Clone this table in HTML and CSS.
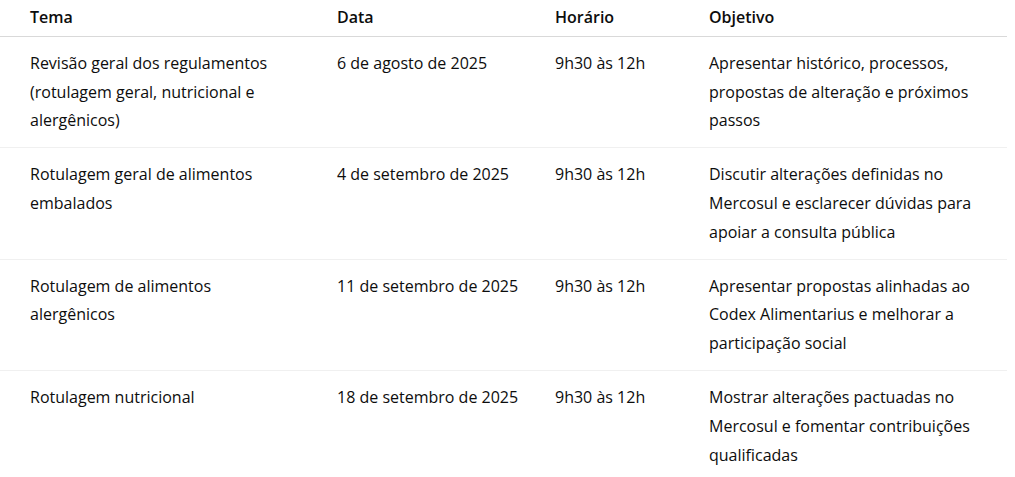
FILE: index.html
```html
<!DOCTYPE html>
<html lang="pt-BR">
<head>
<meta charset="utf-8">
<link rel="stylesheet" href="styles.css">
</head>
<body>
<table class="agenda">
  <colgroup>
    <col class="c1"><col class="c2"><col class="c3"><col class="c4">
  </colgroup>
  <thead>
    <tr><th>Tema</th><th>Data</th><th>Horário</th><th>Objetivo</th></tr>
  </thead>
  <tbody>
    <tr>
      <td>Revisão geral dos regulamentos (rotulagem geral, nutricional e alergênicos)</td>
      <td>6 de agosto de 2025</td>
      <td>9h30 às 12h</td>
      <td>Apresentar histórico, processos, propostas de alteração e próximos passos</td>
    </tr>
    <tr>
      <td>Rotulagem geral de alimentos embalados</td>
      <td>4 de setembro de 2025</td>
      <td>9h30 às 12h</td>
      <td>Discutir alterações definidas no Mercosul e esclarecer dúvidas para apoiar a consulta pública</td>
    </tr>
    <tr>
      <td>Rotulagem de alimentos alergênicos</td>
      <td>11 de setembro de 2025</td>
      <td>9h30 às 12h</td>
      <td>Apresentar propostas alinhadas ao Codex Alimentarius e melhorar a participação social</td>
    </tr>
    <tr>
      <td>Rotulagem nutricional</td>
      <td>18 de setembro de 2025</td>
      <td>9h30 às 12h</td>
      <td>Mostrar alterações pactuadas no Mercosul e fomentar contribuições qualificadas</td>
    </tr>
  </tbody>
</table>
</body>
</html>
```
FILE: styles.css
```css
html, body {
  margin: 0;
  padding: 0;
  background: #ffffff;
}
body {
  font-family: "Open Sans", "Noto Sans", "Liberation Sans", sans-serif;
  font-size: 16px;
  color: #0d0d0d;
}
.agenda {
  width: 1007px;
  border-collapse: collapse;
  table-layout: fixed;
}
.c1 { width: 321px; }
.c2 { width: 218px; }
.c3 { width: 154px; }
.c4 { width: 314px; }
.agenda th, .agenda td {
  text-align: left;
  vertical-align: top;
  padding: 0 16px;
  line-height: 28.8px;
}
.agenda th:first-child, .agenda td:first-child {
  padding-left: 30px;
  padding-right: 32px;
}
.agenda th {
  font-weight: 600;
  padding-top: 3px;
  padding-bottom: 4px;
  border-bottom: 1px solid #d9d9d9;
}
.agenda td {
  padding-top: 12px;
  padding-bottom: 12px;
  border-bottom: 1px solid #f0f0f0;
}
.agenda tbody tr:last-child td {
  border-bottom: none;
}
```
